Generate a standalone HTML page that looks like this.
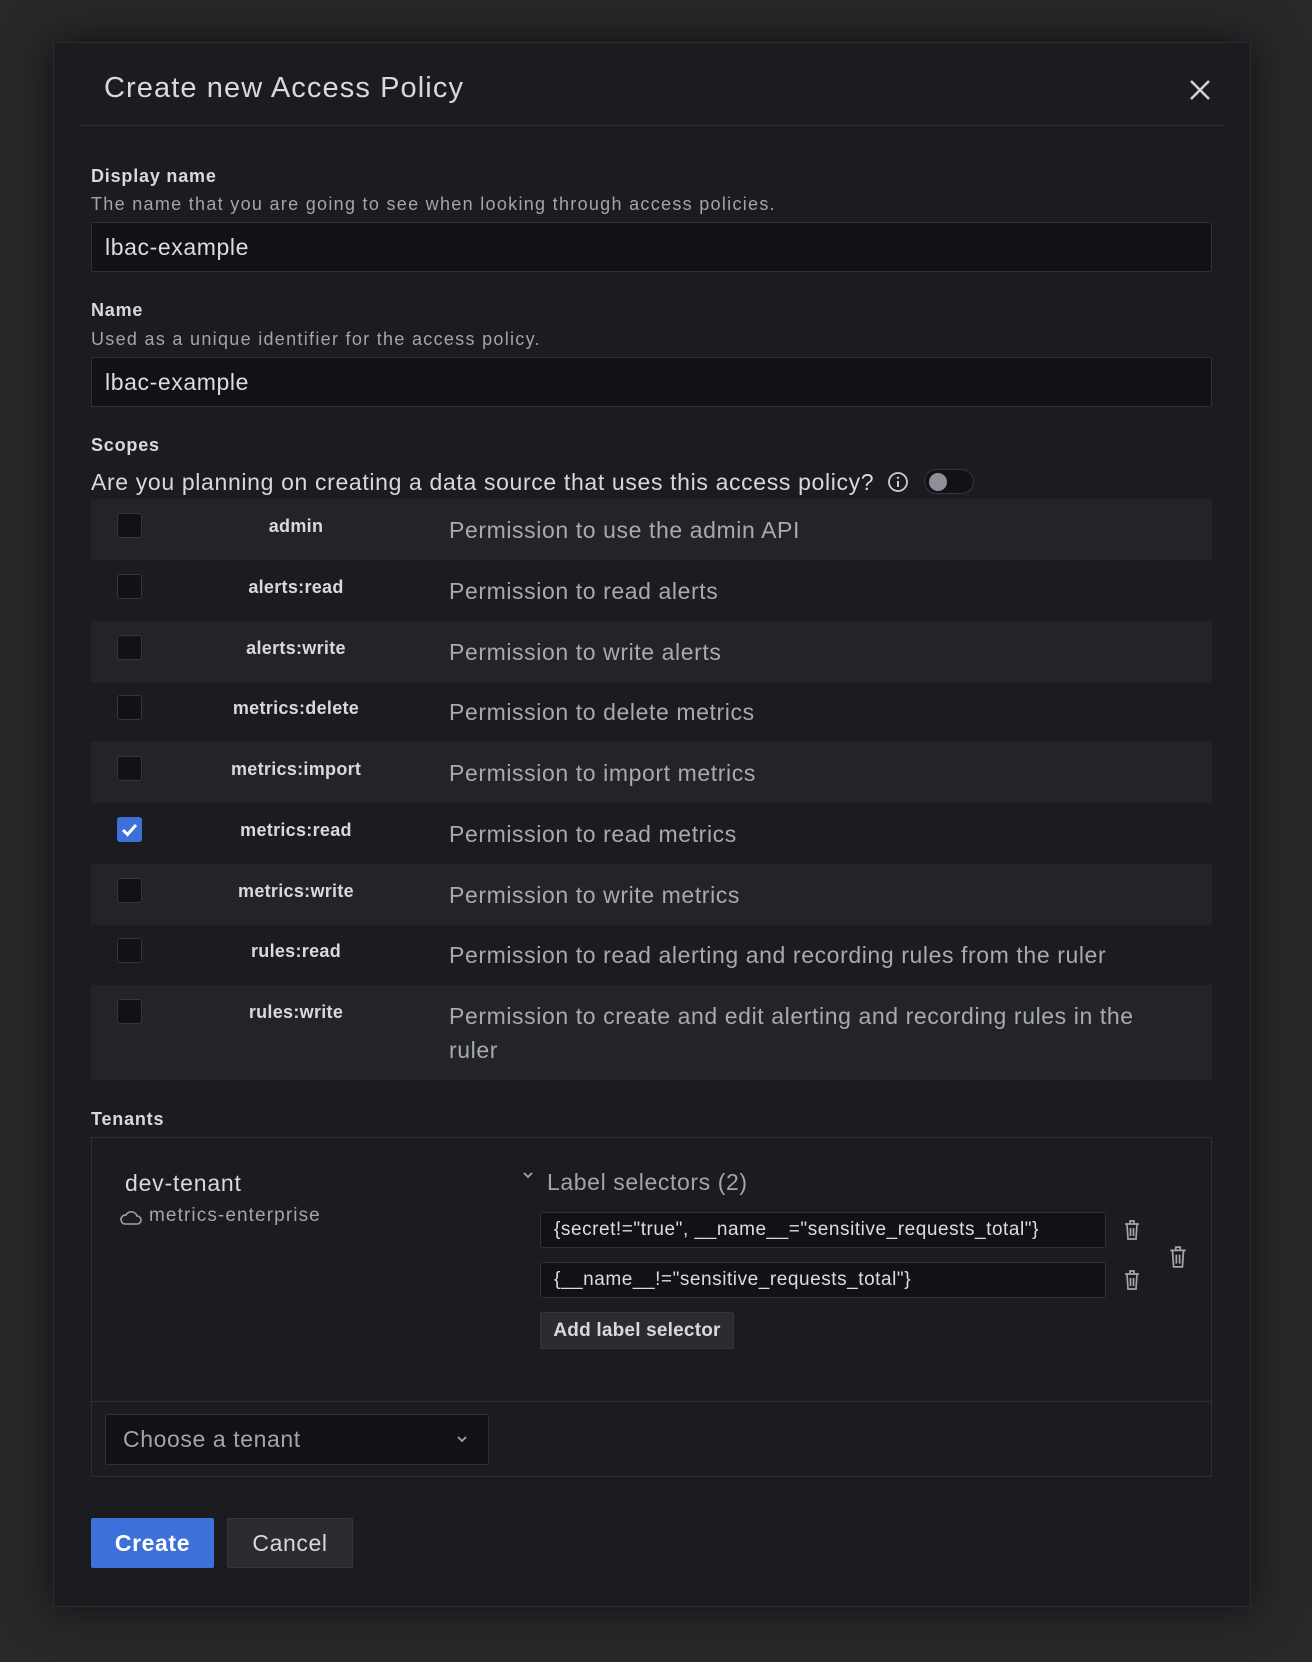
<!DOCTYPE html>
<html><head><meta charset="utf-8"><style>
*{box-sizing:border-box;margin:0;padding:0}
body{width:1312px;height:1662px;background:#28282a;font-family:"Liberation Sans",sans-serif;color:#ccccdc;position:relative;overflow:hidden;letter-spacing:0.6px}
.a{position:absolute}
.modal{left:53px;top:42px;width:1198px;height:1565px;background:#1b1c1f;border:1px solid #2c2d31;box-shadow:0 0 40px rgba(0,0,0,.6)}
.lbl{font-size:18px;font-weight:bold;color:#d8d9e0;letter-spacing:0.8px}
.desc{font-size:18px;color:#a3a4ad;letter-spacing:1.3px}
.inp{background:#111217;border:1px solid #2f3035;border-radius:2px;font-size:23px;color:#dcdde3;padding-left:13px;display:flex;align-items:center}
.row{left:91px;width:1121px;height:61px}
.row.l{background:#222428}
.cb{position:absolute;left:26px;top:14px;width:25px;height:25px;border:1px solid #34363c;border-radius:3px;background:#111217}
.sn{position:absolute;left:140px;width:130px;text-align:center;top:17px;font-size:18px;font-weight:bold;color:#d8d9e0;letter-spacing:0.3px}
.sd{position:absolute;left:358px;top:14px;font-size:23px;color:#a8a9b2;line-height:34px;width:700px}
.btn{border-radius:2px;display:flex;align-items:center;justify-content:center}
</style></head><body>
<div class="a modal"></div>
<div class="a" style="left:104px;top:72px;font-size:29px;color:#d8d9e0;letter-spacing:1.1px">Create new Access Policy</div>
<svg class="a" style="left:1188px;top:78px" width="24" height="24" viewBox="0 0 24 24"><path d="M3 3L21 21M21 3L3 21" stroke="#d0d1d8" stroke-width="2.6"/></svg>
<div class="a" style="left:79px;top:125px;width:1145px;height:1px;background:#2f3035"></div>

<div class="a lbl" style="left:91px;top:166px">Display name</div>
<div class="a desc" style="left:91px;top:194px">The name that you are going to see when looking through access policies.</div>
<div class="a inp" style="left:91px;top:222px;width:1121px;height:50px">lbac-example</div>

<div class="a lbl" style="left:91px;top:300px">Name</div>
<div class="a desc" style="left:91px;top:329px">Used as a unique identifier for the access policy.</div>
<div class="a inp" style="left:91px;top:357px;width:1121px;height:50px">lbac-example</div>

<div class="a lbl" style="left:91px;top:435px">Scopes</div>
<div class="a" style="left:91px;top:469px;font-size:23px;color:#d8d9e0;letter-spacing:0.65px">Are you planning on creating a data source that uses this access policy?</div>
<svg class="a" style="left:887px;top:471px" width="22" height="22" viewBox="0 0 22 22"><circle cx="11" cy="11" r="9" fill="none" stroke="#ccccdc" stroke-width="1.8"/><path d="M11 10v6" stroke="#ccccdc" stroke-width="2"/><circle cx="11" cy="6.8" r="1.2" fill="#ccccdc"/></svg>
<div class="a" style="left:924px;top:469px;width:50px;height:25px;border:1px solid #34363c;border-radius:13px;background:#111217"><div style="position:absolute;left:4px;top:3px;width:18px;height:18px;border-radius:50%;background:#8e8f98"></div></div>

<div class="a row l" style="top:499px"><div class="cb"></div><div class="sn">admin</div><div class="sd">Permission to use the admin API</div></div>
<div class="a row" style="top:560px"><div class="cb"></div><div class="sn">alerts:read</div><div class="sd">Permission to read alerts</div></div>
<div class="a row l" style="top:621px"><div class="cb"></div><div class="sn">alerts:write</div><div class="sd">Permission to write alerts</div></div>
<div class="a row" style="top:681px"><div class="cb"></div><div class="sn">metrics:delete</div><div class="sd">Permission to delete metrics</div></div>
<div class="a row l" style="top:742px"><div class="cb"></div><div class="sn">metrics:import</div><div class="sd">Permission to import metrics</div></div>
<div class="a row" style="top:803px"><div class="cb" style="background:#3d71d9;border-color:#3d71d9"><svg width="25" height="25" viewBox="0 0 25 25" style="position:absolute;left:-1px;top:-1px"><path d="M6 13l4.5 4.5L19 8" fill="none" stroke="#fff" stroke-width="3"/></svg></div><div class="sn">metrics:read</div><div class="sd">Permission to read metrics</div></div>
<div class="a row l" style="top:864px"><div class="cb"></div><div class="sn">metrics:write</div><div class="sd">Permission to write metrics</div></div>
<div class="a row" style="top:924px"><div class="cb"></div><div class="sn">rules:read</div><div class="sd">Permission to read alerting and recording rules from the ruler</div></div>
<div class="a row l" style="top:985px;height:95px"><div class="cb"></div><div class="sn">rules:write</div><div class="sd" style="width:690px">Permission to create and edit alerting and recording rules in the ruler</div></div>

<div class="a lbl" style="left:91px;top:1109px">Tenants</div>
<div class="a" style="left:91px;top:1137px;width:1121px;height:340px;border:1px solid #2f3035"></div>
<div class="a" style="left:92px;top:1401px;width:1119px;height:1px;background:#2f3035"></div>
<div class="a" style="left:125px;top:1170px;font-size:23px;color:#d8d9e0;letter-spacing:0.8px">dev-tenant</div>
<svg class="a" style="left:120px;top:1208px" width="22" height="18" viewBox="0 0 22 18"><path d="M5 16h12a4 4 0 0 0 0-8 6 6 0 0 0-11-1A4.5 4.5 0 0 0 5 16z" fill="none" stroke="#9fa0a9" stroke-width="1.6"/></svg>
<div class="a" style="left:149px;top:1205px;font-size:19px;color:#a3a4ad;letter-spacing:1.1px">metrics-enterprise</div>
<svg class="a" style="left:521px;top:1170px" width="14" height="10" viewBox="0 0 14 10"><path d="M3 3l4 4 4-4" fill="none" stroke="#a3a4ad" stroke-width="1.8"/></svg>
<div class="a" style="left:547px;top:1169px;font-size:23px;color:#a3a4ad">Label selectors (2)</div>
<div class="a inp" style="left:540px;top:1212px;width:566px;height:36px;font-size:19px;letter-spacing:0.55px">{secret!="true", __name__="sensitive_requests_total"}</div>
<div class="a inp" style="left:540px;top:1262px;width:566px;height:36px;font-size:19px;letter-spacing:0.55px">{__name__!="sensitive_requests_total"}</div>
<svg class="a" style="left:1122px;top:1218px" width="20" height="24" viewBox="0 0 20 24"><path d="M3 6h14M8 6V3h4v3M5 6l1 15h8l1-15M8.5 10v8M11.5 10v8" fill="none" stroke="#a3a4ad" stroke-width="1.7"/></svg>
<svg class="a" style="left:1122px;top:1268px" width="20" height="24" viewBox="0 0 20 24"><path d="M3 6h14M8 6V3h4v3M5 6l1 15h8l1-15M8.5 10v8M11.5 10v8" fill="none" stroke="#a3a4ad" stroke-width="1.7"/></svg>
<svg class="a" style="left:1167px;top:1243px" width="22" height="28" viewBox="0 0 20 24"><path d="M3 6h14M8 6V3h4v3M5 6l1 15h8l1-15M8.5 10v8M11.5 10v8" fill="none" stroke="#a3a4ad" stroke-width="1.6"/></svg>
<div class="a btn" style="left:540px;top:1312px;width:194px;height:37px;background:#2a2c31;border:1px solid #35373d;font-size:19px;font-weight:bold;color:#d8d9e0;letter-spacing:0.2px">Add label selector</div>
<div class="a inp" style="left:105px;top:1414px;width:384px;height:51px;padding-left:17px;color:#a3a4ad">Choose a tenant</div>
<svg class="a" style="left:455px;top:1434px" width="14" height="10" viewBox="0 0 14 10"><path d="M3 3l4 4 4-4" fill="none" stroke="#a3a4ad" stroke-width="1.8"/></svg>

<div class="a btn" style="left:91px;top:1518px;width:123px;height:50px;background:#3d71d9;color:#fff;font-size:23px;font-weight:bold">Create</div>
<div class="a btn" style="left:227px;top:1518px;width:126px;height:50px;background:#2a2c31;border:1px solid #35373d;color:#d8d9e0;font-size:23px">Cancel</div>
</body></html>
